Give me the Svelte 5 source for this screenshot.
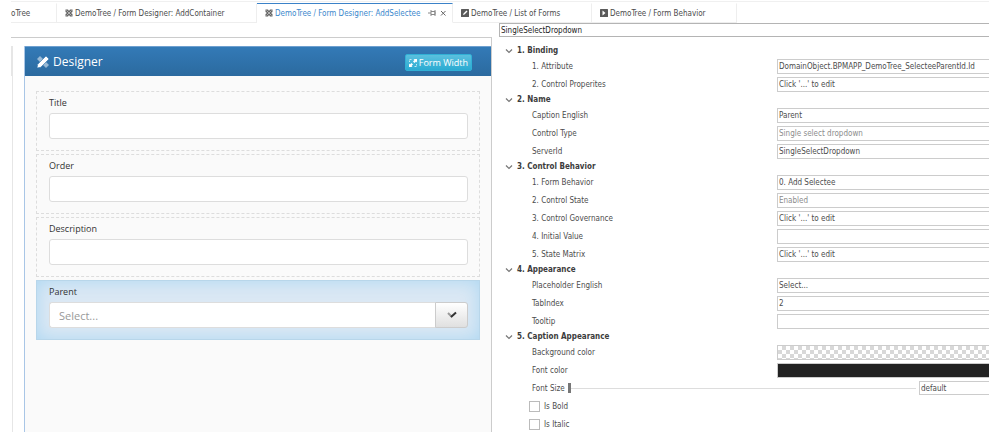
<script>
	let tabs = [
		{ title: "oTree", icon: "", width: 46 },
		{ title: "DemoTree / Form Designer: AddContainer", icon: "design", width: 200 },
		{ title: "DemoTree / Form Designer: AddSelectee", icon: "design", width: 196, active: true },
		{ title: "DemoTree / List of Forms", icon: "list", width: 139 },
		{ title: "DemoTree / Form Behavior", icon: "play", width: 145 },
	];

	let fields = ["Title", "Order", "Description"];

	let groups = [
		{
			title: "1. Binding",
			rows: [
				{ label: "1. Attribute", value: "DomainObject.BPMAPP_DemoTree_SelecteeParentId.Id" },
				{ label: "2. Control Properites", value: "Click '...' to edit" },
			],
		},
		{
			title: "2. Name",
			rows: [
				{ label: "Caption English", value: "Parent" },
				{ label: "Control Type", value: "Single select dropdown", readonly: true },
				{ label: "ServerId", value: "SingleSelectDropdown" },
			],
		},
		{
			title: "3. Control Behavior",
			rows: [
				{ label: "1. Form Behavior", value: "0. Add Selectee" },
				{ label: "2. Control State", value: "Enabled", readonly: true },
				{ label: "3. Control Governance", value: "Click '...' to edit" },
				{ label: "4. Initial Value", value: "" },
				{ label: "5. State Matrix", value: "Click '...' to edit" },
			],
		},
		{
			title: "4. Appearance",
			rows: [
				{ label: "Placeholder English", value: "Select..." },
				{ label: "TabIndex", value: "2" },
				{ label: "Tooltip", value: "" },
			],
		},
		{
			title: "5. Caption Appearance",
			rows: [
				{ label: "Background color", type: "swatch", style: "checker" },
				{ label: "Font color", type: "swatch", style: "dark" },
				{ label: "Font Size", type: "slider" },
				{ label: "Is Bold", type: "check" },
				{ label: "Is Italic", type: "check" },
			],
		},
	];
	let closed = $state({});
	let fontSize = $state(0);
</script>

<div class="page">
	<nav class="tabs">
		{#each tabs as tab}
			<div class="tab" class:active={tab.active} class:first={!tab.icon} style="width: {tab.width}px">
				{#if tab.icon}
					<svg class="tab-icon" viewBox="0 0 16 16">
						{#if tab.icon == "design"}
							<path d="M1 1h5l2 3 2-3h5v5l-3 2 3 2v5h-5l-2-3-2 3H1v-5l3-2-3-2z" fill="#666" />
							<path d="M3 3l10 10M13 3 3 13" stroke="#fff" stroke-width="1" fill="none" />
						{:else if tab.icon == "list"}
							<rect width="16" height="16" rx="1" fill="#5a5a5a" />
							<path d="M11 3l2 2-6 6-3 1 1-3z" fill="#fff" />
						{:else}
							<rect width="16" height="16" rx="1" fill="#5a5a5a" />
							<path d="M5 3l6 5-6 5z" fill="#fff" />
						{/if}
					</svg>
				{/if}
				<a href="#{tab.title}">{tab.title}</a>
				{#if tab.active}
					<button class="tool" aria-label="Pin">
						<svg viewBox="0 0 8 8"><path d="M0 4h3M3 1v6M3 2.5h4v3H3M7 1v6" fill="none" stroke="#888" /></svg>
					</button>
					<button class="tool" aria-label="Close">
						<svg viewBox="0 0 8 8"><path d="M2 2l4.5 4.5M6.500 2 2 6.500" fill="none" stroke="#666" /></svg>
					</button>
				{/if}
			</div>
		{/each}
	</nav>

	<div class="main">
		<div class="canvas">
			<div class="side"></div>
			<section class="designer">
				<header>
					<svg class="logo" viewBox="0 0 16 16">
						<path d="M4 0 0 4l12 12 4-4z" fill="#fff" opacity=".5" />
						<path d="M12 0l4 4L5 15l-5 1 1-5z" fill="#fff" stroke="#2f72ac" stroke-width=".8" />
					</svg>
					<h1>Designer</h1>
					<button class="form-width">
						<svg viewBox="0 0 16 16">
							<path d="M9 0h7v7l-2-2-3 3-3-3 3-3zM7 16H0V9l2 2 3-3 3 3-3 3z" fill="#fff" />
							<path d="M1 6V1h5M15 10v5h-5" fill="none" stroke="#fff" stroke-width="1.4" stroke-dasharray="2 1" />
						</svg>
						Form Width
					</button>
				</header>
				<div class="cards">
					{#each fields as field}
						<div class="card">
							<label for={field}>{field}</label>
							<input id={field} type="text" />
						</div>
					{/each}
					<div class="card selected">
						<label for="parent">Parent</label>
						<div class="combo">
							<input id="parent" type="text" placeholder="Select..." />
							<button aria-label="Open list">
								<svg viewBox="0 0 10 8"><path d="M1 2l4 4" stroke="#999" stroke-width="2" /><path d="M4 6l5-4.500" stroke="#333" stroke-width="2" /></svg>
							</button>
						</div>
					</div>
				</div>
			</section>
		</div>

		<aside class="props">
			<input class="control-name" type="text" aria-label="Control" value="SingleSelectDropdown" />
			<div class="groups">
				{#each groups as group, g}
					<button class="group-title" onclick={() => (closed[g] = !closed[g])}>
						<svg viewBox="0 0 8 6"><path d="M1 1.500l3 3 3-3" fill="none" stroke="#777" stroke-width="1.2" /></svg>
						{group.title}
					</button>
					{#if !closed[g]}
						{#each group.rows as row, r}
							<div class="row">
								{#if row.type == "check"}
									<label class="check"><input type="checkbox" />{row.label}</label>
								{:else if row.type == "slider"}
									<label for="p{g}-{r}">{row.label}</label>
									<input class="slider" id="p{g}-{r}" type="range" min="0" max="40" bind:value={fontSize} />
									<input class="value size" type="text" aria-label="Font size value" value={fontSize ? fontSize : "default"} />
								{:else}
									<label class="name" for="p{g}-{r}">{row.label}</label>
									{#if row.type == "swatch"}
										<button class="swatch {row.style}" id="p{g}-{r}" aria-label={row.label}></button>
									{:else}
										<input class="value" class:muted={row.readonly} id="p{g}-{r}" type="text" value={row.value} readonly={row.readonly} />
									{/if}
								{/if}
							</div>
						{/each}
					{/if}
				{/each}
			</div>
		</aside>
	</div>
</div>

<style>
	:global(body) {
		margin: 0;
		background: #fff;
	}

	* {
		box-sizing: border-box;
	}

	input, button {
		font: inherit;
		color: inherit;
		margin: 0;
		outline: none;
	}

	svg {
		display: block;
	}

	.page {
		display: flex;
		flex-direction: column;
		height: 100vh;
		padding: 1px 11px 0;
		overflow: hidden;
		font-family: "DejaVu Sans Condensed", Tahoma, "DejaVu Sans", sans-serif;
		font-size: 8px;
		color: #4c4c4c;
	}

	.tabs {
		display: flex;
		flex: none;
		height: 22px;
		padding-top: 1px;
		border-top: 1px solid #f0f0f0;
	}

	.tab {
		display: flex;
		flex: none;
		align-items: center;
		gap: 2px;
		padding-left: 8px;
		border-top: 1px solid transparent;
		border-right: 1px solid #eee;
		border-bottom: 1px solid #eee;
		white-space: nowrap;
	}

	.tab.first {
		padding-left: 0;
	}

	.tab.active {
		border-top-color: #3b82c8;
		border-bottom-color: transparent;
	}

	.tab a {
		color: inherit;
		text-decoration: none;
	}

	.tab.active a {
		color: #3b87cc;
		margin-right: 6px;
	}

	.tab-icon {
		flex: none;
		width: 8px;
		height: 8px;
	}

	.tool {
		flex: none;
		width: 9px;
		padding: 0;
		border: 0;
		background: none;
	}

	.tool svg {
		width: 8px;
		height: 8px;
	}

	.main {
		display: grid;
		grid-template-columns: 488fr 490fr;
		flex: 1;
		min-height: 0;
	}

	.canvas {
		display: flex;
		gap: 11px;
		margin: 14px 7px 0 0;
		padding-top: 8px;
		border-top: 1px solid #ccc;
		border-right: 1px solid #ccc;
	}

	.side {
		width: 2px;
		border-right: 1px solid #e6e6e6;
		background: linear-gradient(#e6e6e6 30px, #fff 30px);
	}

	.designer {
		flex: 1;
		border-left: 1px solid #a9c6e6;
		background: #fafafa;
		font-family: "Open Sans", "Segoe UI", sans-serif;
		font-size: 9px;
	}

	header {
		display: flex;
		align-items: center;
		height: 30px;
		padding: 0 19px 0 12px;
		border-top: 1px solid #6ea0d0;
		background: linear-gradient(#337ab7, #2b6a9f);
		color: #fff;
	}

	.logo {
		width: 12px;
		height: 12px;
	}

	h1 {
		flex: 1;
		margin: 0 0 0 4px;
		font-size: 12px;
		font-weight: 400;
	}

	.form-width {
		display: flex;
		align-items: center;
		gap: 2px;
		height: 17px;
		margin-top: 2px;
		padding: 0 3px;
		border: 1px solid #31b0d5;
		border-radius: 2px;
		background: linear-gradient(#5bc0de, #2aabd2);
	}

	.form-width svg {
		width: 8px;
		height: 8px;
	}

	.cards {
		display: flex;
		flex-direction: column;
		gap: 3px;
		padding: 15px 11px 0;
	}

	.card {
		padding: 3px 11px 11px 12px;
		border: 1px dashed #ddd;
		color: #333;
	}

	.card label {
		display: block;
		height: 18px;
		line-height: 16px;
	}

	.card input {
		display: block;
		width: 100%;
		height: 26px;
		padding: 0 9px;
		border: 1px solid #ddd;
		border-radius: 3px;
		background: #fff;
		font-size: 11px;
	}

	.card input::placeholder {
		color: #999;
		opacity: 1;
	}

	.card.selected {
		background: #dbe8f4;
		border: 1px solid #b8d6ea;
		box-shadow: inset 0 0 18px #add7f2;
	}

	.card .combo {
		display: flex;
	}

	.card .combo input {
		flex: 1;
		border-radius: 3px 0 0 3px;
		border-right: 0;
	}

	.combo button {
		display: flex;
		align-items: center;
		justify-content: center;
		width: 33px;
		border: 1px solid #ccc;
		border-radius: 0 3px 3px 0;
		background: linear-gradient(#fff, #e0e0e0);
	}

	.combo svg {
		width: 10px;
		height: 8px;
	}

	.control-name {
		display: block;
		width: 100%;
		height: 14px;
		padding: 0 0 0 1px;
		border: 1px solid #b4b4b4;
		border-right: 0;
		color: #222;
	}

	.groups {
		padding-top: 7px;
	}

	.group-title {
		display: flex;
		align-items: center;
		gap: 4px;
		width: 100%;
		height: 13px;
		padding: 0 0 0 6px;
		border: 0;
		background: none;
		color: #3c3c3c;
		font-weight: 700;
	}

	.group-title svg {
		width: 8px;
		height: 6px;
	}

	.row {
		display: flex;
		align-items: center;
		height: 18px;
		padding-left: 33px;
		white-space: nowrap;
	}

	.name {
		flex: 1;
	}

	.value, .swatch {
		flex: none;
		width: calc(212 / 457 * 100%);
		height: 15px;
		padding: 0 0 0 1px;
		border: 1px solid #ccc;
		border-right: 0;
		border-radius: 0;
		background: #fff;
	}

	.value.muted {
		color: #8c8c8c;
	}

	.value.size {
		width: 70px;
		height: 14px;
	}

	.swatch.checker {
		background: repeating-conic-gradient(#d8d8d8 0 25%, #fff 0 50%) 0 0 / 8px 8px;
	}

	.swatch.dark {
		background: #222;
	}

	.slider {
		flex: 1;
		height: 10px;
		margin: 0 3px;
		appearance: none;
		background: linear-gradient(#ddd, #ddd) center / 100% 1px no-repeat;
	}

	.slider::-webkit-slider-thumb {
		appearance: none;
		width: 3px;
		height: 10px;
		background: #777;
	}

	.check {
		display: flex;
		align-items: center;
		gap: 4px;
		margin-left: -3px;
	}

	.check input {
		appearance: none;
		width: 11px;
		height: 11px;
		border: 1px solid #bbb;
		background: #fff;
	}
</style>
